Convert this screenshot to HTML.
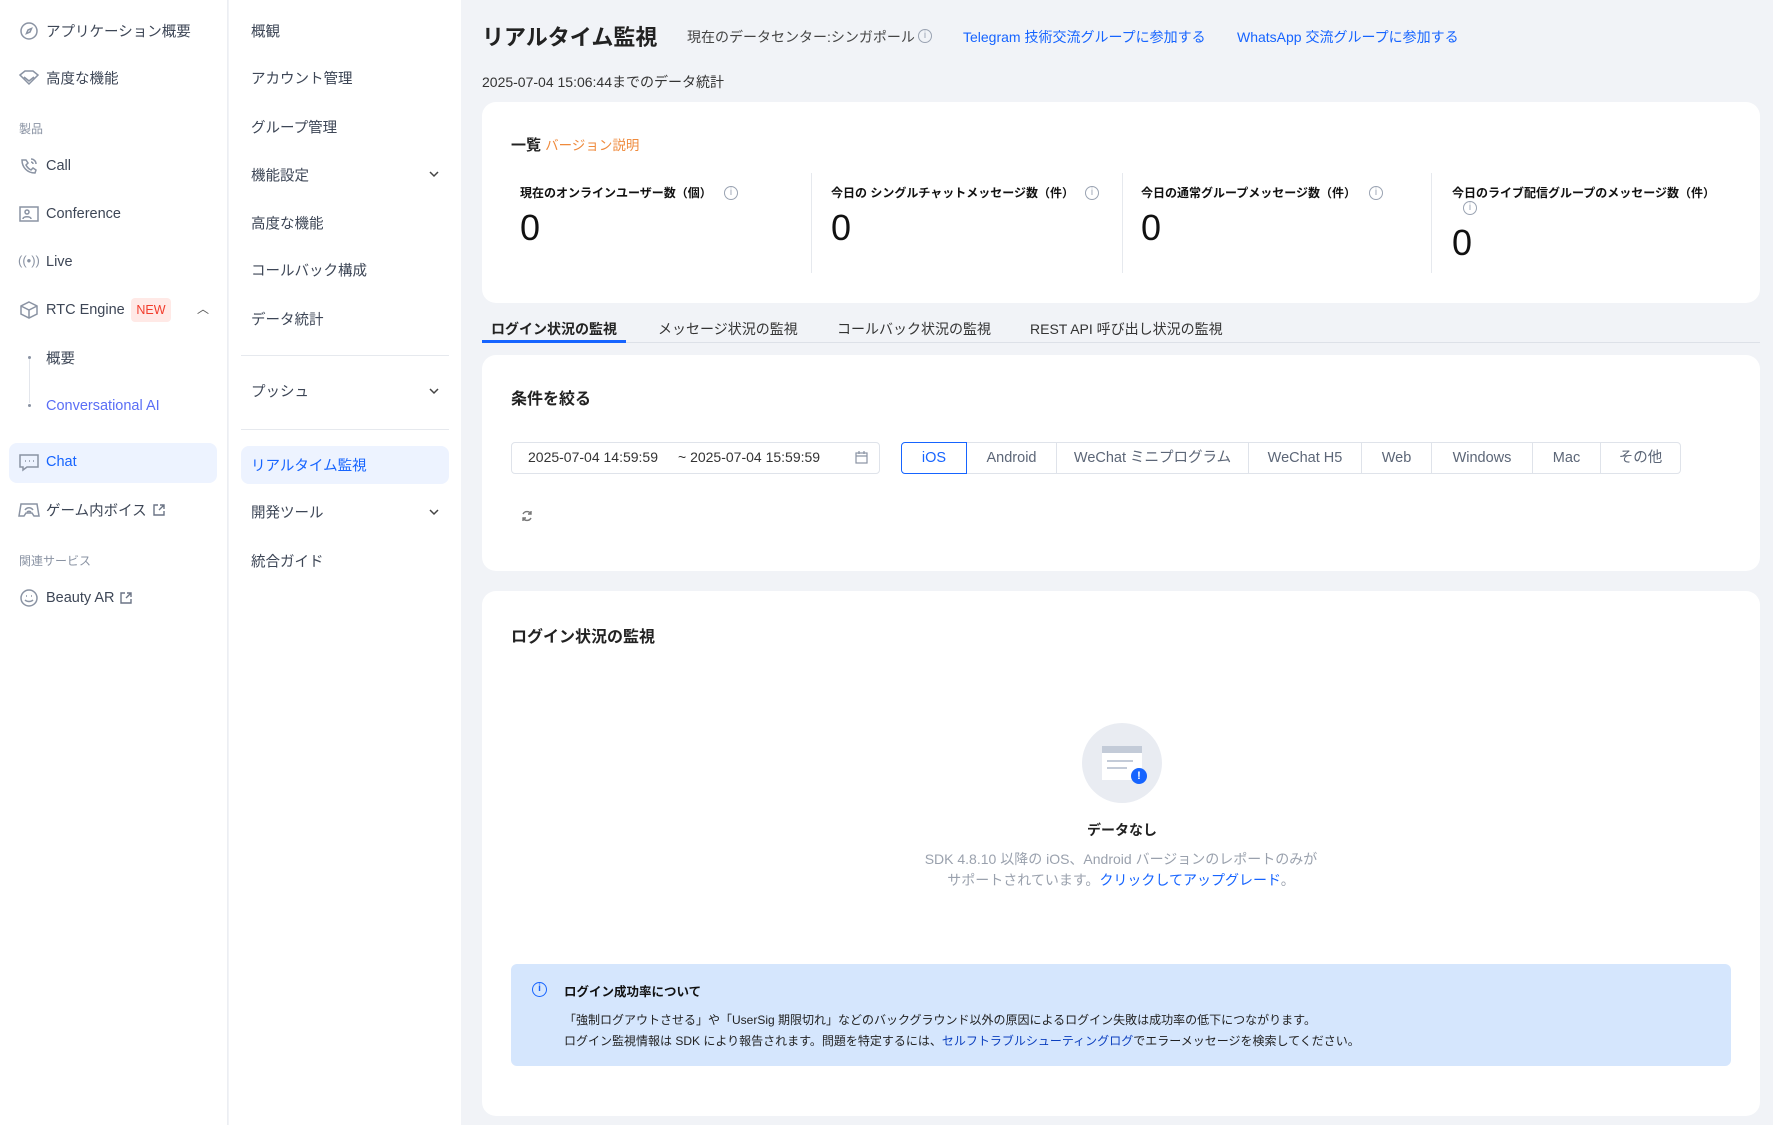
<!DOCTYPE html>
<html><head><meta charset="utf-8"><style>
*{margin:0;padding:0;box-sizing:border-box}
body{width:1773px;height:1125px;overflow:hidden;background:#f1f3f7;font-family:"Liberation Sans","Noto Sans CJK JP",sans-serif;color:#222;position:relative}
.a{position:absolute;white-space:nowrap}
.s1{left:0;top:0;width:228px;height:1125px;background:#fff;border-right:1px solid #eceef2}
.s2{left:229px;top:0;width:232px;height:1125px;background:#fff}
.ni{font-size:14.5px;color:#3d4656;transform:translateY(-50%)}
.ic{position:absolute;transform:translateY(-50%)}
.card{position:absolute;left:482px;width:1278px;background:#fff;border-radius:14px}
.lbl{font-size:12px;font-weight:bold;color:#111}
.num{font-size:36px;color:#111}
.info{width:14px;height:14px;border:1px solid #9aa3b2;border-radius:50%;font-size:10px;color:#9aa3b2;text-align:center;line-height:12px}
.seg{position:absolute;top:442px;height:32px;border:1px solid #dfe3ea;font-size:14.5px;color:#5c6677;text-align:center;line-height:30px}
.tab{font-size:14px}
</style></head><body>
<div class="a s1"></div>
<div class="a s2"></div>
<div class="a" style="left:9px;top:443px;width:208px;height:40px;background:#edf3ff;border-radius:8px"></div>
<svg class="a" style="left:19px;top:21px" width="20" height="20" viewBox="0 0 20 20" fill="none" stroke="#8a93a3" stroke-width="1.5"><circle cx="10" cy="10" r="8"/><path d="M12.5 7.5 9 9 7.5 12.5 11 11z"/></svg>
<div class="a ni" style="left:46px;top:31px">アプリケーション概要</div>
<svg class="a" style="left:18px;top:69px" width="22" height="18" viewBox="0 0 22 18" fill="none" stroke="#8a93a3" stroke-width="1.5"><path d="M2 6 7 2h8l5 4-9 9z M6 8l5 4 5-4"/></svg>
<div class="a ni" style="left:46px;top:78px">高度な機能</div>
<div class="a" style="left:19px;top:120px;font-size:12px;color:#8a93a3">製品</div>
<svg class="a" style="left:19px;top:156px" width="20" height="20" viewBox="0 0 20 20" fill="none" stroke="#8a93a3" stroke-width="1.5"><path d="M3 4c0 7 5 13 13 13l1-3-3-2-2 2c-2-1-4-3-5-5l2-2-2-3z M12 3a5 5 0 0 1 5 5 M12 6a2 2 0 0 1 2 2"/></svg>
<div class="a ni" style="left:46px;top:166px">Call</div>
<svg class="a" style="left:19px;top:205px" width="20" height="18" viewBox="0 0 20 18" fill="none" stroke="#8a93a3" stroke-width="1.5"><rect x="1" y="2" width="18" height="14"/><circle cx="8" cy="7" r="2"/><path d="M4 14c0-3 8-3 8 0"/></svg>
<div class="a ni" style="left:46px;top:214px">Conference</div>
<div class="a" style="left:18px;top:253px;font-size:13px;color:#8a93a3">((•))</div>
<div class="a ni" style="left:46px;top:262px">Live</div>
<svg class="a" style="left:19px;top:300px" width="20" height="20" viewBox="0 0 20 20" fill="none" stroke="#8a93a3" stroke-width="1.5"><path d="M10 2 18 6v8l-8 4-8-4V6z M2 6l8 4 8-4 M10 10v8"/></svg>
<div class="a ni" style="left:46px;top:310px">RTC Engine</div>
<div class="a" style="left:131px;top:298px;width:40px;height:24px;background:#ffe9e6;border-radius:4px;color:#f23c2c;font-size:12.5px;text-align:center;line-height:24px">NEW</div>
<div class="a" style="left:197px;top:300px;font-size:12px;color:#555">︿</div>
<div class="a" style="left:28px;top:356px;width:3px;height:3px;background:#8a93a3;border-radius:50%"></div>
<div class="a" style="left:29px;top:359px;width:1px;height:44px;background:#e3e6ec"></div>
<div class="a" style="left:28px;top:404px;width:3px;height:3px;background:#8a93a3;border-radius:50%"></div>
<div class="a ni" style="left:46px;top:358px">概要</div>
<div class="a ni" style="left:46px;top:406px;color:#5a6ef5">Conversational AI</div>
<svg class="a" style="left:19px;top:453px" width="20" height="19" viewBox="0 0 20 19" fill="none" stroke="#8a93a3" stroke-width="1.5"><path d="M1 2h18v12H8l-4 3v-3H1z"/><path d="M6 8h1M10 8h1M14 8h1"/></svg>
<div class="a ni" style="left:46px;top:462px;color:#1664ff">Chat</div>
<svg class="a" style="left:18px;top:501px" width="22" height="18" viewBox="0 0 22 18" fill="none" stroke="#8a93a3" stroke-width="1.5"><path d="M3 3h16l2 12h-5l-2-3H8l-2 3H1z M7 9c2-3 6-3 8 0 M9 11c1-1 3-1 4 0"/></svg>
<div class="a ni" style="left:46px;top:510px">ゲーム内ボイス</div>
<svg class="a" style="left:153px;top:504px" width="12" height="12" viewBox="0 0 12 12" fill="none" stroke="#6b7485" stroke-width="1.4"><path d="M5 1H1v10h10V7 M7 1h4v4 M11 1 6 6"/></svg>
<div class="a" style="left:19px;top:552px;font-size:12px;color:#8a93a3">関連サービス</div>
<svg class="a" style="left:19px;top:588px" width="20" height="20" viewBox="0 0 20 20" fill="none" stroke="#8a93a3" stroke-width="1.5"><circle cx="10" cy="10" r="8"/><path d="M6 12c2 2 6 2 8 0 M7 8h1M12 8h1"/></svg>
<div class="a ni" style="left:46px;top:598px">Beauty AR</div>
<svg class="a" style="left:120px;top:592px" width="12" height="12" viewBox="0 0 12 12" fill="none" stroke="#6b7485" stroke-width="1.4"><path d="M5 1H1v10h10V7 M7 1h4v4 M11 1 6 6"/></svg>
<div class="a" style="left:241px;top:446px;width:208px;height:38px;background:#edf3ff;border-radius:8px"></div>
<div class="a ni" style="left:251px;top:31px">概観</div>
<div class="a ni" style="left:251px;top:78px">アカウント管理</div>
<div class="a ni" style="left:251px;top:127px">グループ管理</div>
<div class="a ni" style="left:251px;top:175px">機能設定</div>
<div class="a ni" style="left:251px;top:223px">高度な機能</div>
<div class="a ni" style="left:251px;top:270px">コールバック構成</div>
<div class="a ni" style="left:251px;top:319px">データ統計</div>
<div class="a" style="left:241px;top:355px;width:208px;height:1px;background:#e6e9ee"></div>
<div class="a ni" style="left:251px;top:391px">プッシュ</div>
<div class="a" style="left:241px;top:429px;width:208px;height:1px;background:#e6e9ee"></div>
<div class="a ni" style="left:251px;top:465px;color:#1664ff">リアルタイム監視</div>
<div class="a ni" style="left:251px;top:512px">開発ツール</div>
<div class="a ni" style="left:251px;top:561px">統合ガイド</div>
<svg class="a" style="left:429px;top:171px" width="10" height="7" viewBox="0 0 10 7" fill="none" stroke="#444" stroke-width="1.5"><path d="M1 1l4 4 4-4"/></svg>
<svg class="a" style="left:429px;top:388px" width="10" height="7" viewBox="0 0 10 7" fill="none" stroke="#444" stroke-width="1.5"><path d="M1 1l4 4 4-4"/></svg>
<svg class="a" style="left:429px;top:509px" width="10" height="7" viewBox="0 0 10 7" fill="none" stroke="#444" stroke-width="1.5"><path d="M1 1l4 4 4-4"/></svg>
<div class="a" style="left:482px;top:20px;font-size:22px;font-weight:bold;color:#222">リアルタイム監視</div>
<div class="a" style="left:687px;top:27px;font-size:14px;color:#444">現在のデータセンター:シンガポール</div>
<div class="a info" style="left:918px;top:29px">i</div>
<div class="a" style="left:963px;top:27px;font-size:14px;color:#1664ff">Telegram 技術交流グループに参加する</div>
<div class="a" style="left:1237px;top:27px;font-size:14px;color:#1664ff">WhatsApp 交流グループに参加する</div>
<div class="a" style="left:482px;top:72px;font-size:14px;color:#333">2025-07-04 15:06:44までのデータ統計</div>
<div class="card" style="top:102px;height:201px"></div>
<div class="a" style="left:511px;top:134px;font-size:15px;font-weight:bold">一覧 <span style="font-weight:normal;color:#ef8a3c;font-size:13.5px">バージョン説明</span></div>
<div class="a lbl" style="left:520px;top:184px">現在のオンラインユーザー数（個）</div>
<div class="a info" style="left:724px;top:186px">i</div>
<div class="a num" style="left:520px;top:207px">0</div>
<div class="a" style="left:811px;top:173px;width:1px;height:100px;background:#e6e9ee"></div>
<div class="a lbl" style="left:831px;top:184px">今日の シングルチャットメッセージ数（件）</div>
<div class="a info" style="left:1085px;top:186px">i</div>
<div class="a num" style="left:831px;top:207px">0</div>
<div class="a" style="left:1122px;top:173px;width:1px;height:100px;background:#e6e9ee"></div>
<div class="a lbl" style="left:1141px;top:184px">今日の通常グループメッセージ数（件）</div>
<div class="a info" style="left:1369px;top:186px">i</div>
<div class="a num" style="left:1141px;top:207px">0</div>
<div class="a" style="left:1431px;top:173px;width:1px;height:100px;background:#e6e9ee"></div>
<div class="a lbl" style="left:1452px;top:184px">今日のライブ配信グループのメッセージ数（件）</div>
<div class="a info" style="left:1463px;top:201px">i</div>
<div class="a num" style="left:1452px;top:222px">0</div>
<div class="a" style="left:482px;top:342px;width:1278px;height:1px;background:#dde1e8"></div>
<div class="a" style="left:482px;top:340px;width:144px;height:3px;background:#1664ff"></div>
<div class="a tab" style="left:491px;top:319px;font-weight:bold">ログイン状況の監視</div>
<div class="a tab" style="left:658px;top:319px;color:#333">メッセージ状況の監視</div>
<div class="a tab" style="left:837px;top:319px;color:#333">コールバック状況の監視</div>
<div class="a tab" style="left:1030px;top:319px;color:#333">REST API 呼び出し状況の監視</div>
<div class="card" style="top:355px;height:216px"></div>
<div class="a" style="left:511px;top:385px;font-size:16px;font-weight:bold">条件を絞る</div>
<div class="a" style="left:511px;top:442px;width:369px;height:32px;border:1px solid #dfe3ea;border-radius:4px"></div>
<div class="a" style="left:528px;top:449px;font-size:14px;color:#333">2025-07-04 14:59:59</div>
<div class="a" style="left:678px;top:449px;font-size:14px;color:#333">~ 2025-07-04 15:59:59</div>
<svg class="a" style="left:855px;top:451px" width="13" height="13" viewBox="0 0 13 13" fill="none" stroke="#8a93a3" stroke-width="1.2"><rect x="1" y="2" width="11" height="10"/><path d="M1 5h11M4 0v3M9 0v3"/></svg>
<div class="seg" style="left:966px;width:91px">Android</div>
<div class="seg" style="left:1056px;width:193px">WeChat ミニプログラム</div>
<div class="seg" style="left:1248px;width:114px">WeChat H5</div>
<div class="seg" style="left:1361px;width:71px">Web</div>
<div class="seg" style="left:1431px;width:102px">Windows</div>
<div class="seg" style="left:1532px;width:69px">Mac</div>
<div class="seg" style="left:1600px;width:81px;border-radius:0 4px 4px 0">その他</div>
<div class="seg" style="left:901px;width:66px;border-color:#1664ff;color:#1664ff;border-radius:4px 0 0 4px">iOS</div>
<svg class="a" style="left:520px;top:509px" width="14" height="14" viewBox="0 0 14 14" fill="none" stroke="#777" stroke-width="1.4"><path d="M11 5A4.5 4.5 0 0 0 3 5 M3 9a4.5 4.5 0 0 0 8 0 M11 2v3H8 M3 12V9h3"/></svg>
<div class="card" style="top:591px;height:525px"></div>
<div class="a" style="left:511px;top:623px;font-size:16px;font-weight:bold">ログイン状況の監視</div>
<div class="a" style="left:1082px;top:723px;width:80px;height:80px;border-radius:50%;background:#e9ecf2"></div>
<div class="a" style="left:1102px;top:746px;width:40px;height:34px;background:#fff"></div>
<div class="a" style="left:1102px;top:746px;width:40px;height:7px;background:#c3cbd8"></div>
<div class="a" style="left:1107px;top:760px;width:26px;height:2px;background:#c3cbd8"></div>
<div class="a" style="left:1107px;top:767px;width:20px;height:2px;background:#c3cbd8"></div>
<div class="a" style="left:1131px;top:768px;width:16px;height:16px;border-radius:50%;background:#1664ff;color:#fff;font-size:11px;font-weight:bold;text-align:center;line-height:16px">!</div>
<div class="a" style="left:1122px;top:820px;transform:translateX(-50%);font-size:14px;font-weight:bold;color:#222">データなし</div>
<div class="a" style="left:1121px;top:849px;transform:translateX(-50%);font-size:14px;color:#9aa1ad">SDK 4.8.10 以降の iOS、Android バージョンのレポートのみが</div>
<div class="a" style="left:1121px;top:870px;transform:translateX(-50%);font-size:14px;color:#9aa1ad">サポートされています。<span style="color:#1664ff">クリックしてアップグレード</span>。</div>
<div class="a" style="left:511px;top:964px;width:1220px;height:102px;background:#d5e6fd;border-radius:6px"></div>
<div class="a" style="left:532px;top:982px;width:15px;height:15px;border:1.5px solid #1664ff;border-radius:50%;color:#1664ff;font-size:10px;text-align:center;line-height:12px;font-weight:bold">i</div>
<div class="a" style="left:564px;top:981px;font-size:12.5px;font-weight:bold;color:#111">ログイン成功率について</div>
<div class="a" style="left:564px;top:1011px;font-size:12px;color:#222">「強制ログアウトさせる」や「UserSig 期限切れ」などのバックグラウンド以外の原因によるログイン失敗は成功率の低下につながります。</div>
<div class="a" style="left:564px;top:1032px;font-size:12px;color:#222">ログイン監視情報は SDK により報告されます。問題を特定するには、<span style="color:#0b3fbf">セルフトラブルシューティングログ</span>でエラーメッセージを検索してください。</div>
</body></html>
